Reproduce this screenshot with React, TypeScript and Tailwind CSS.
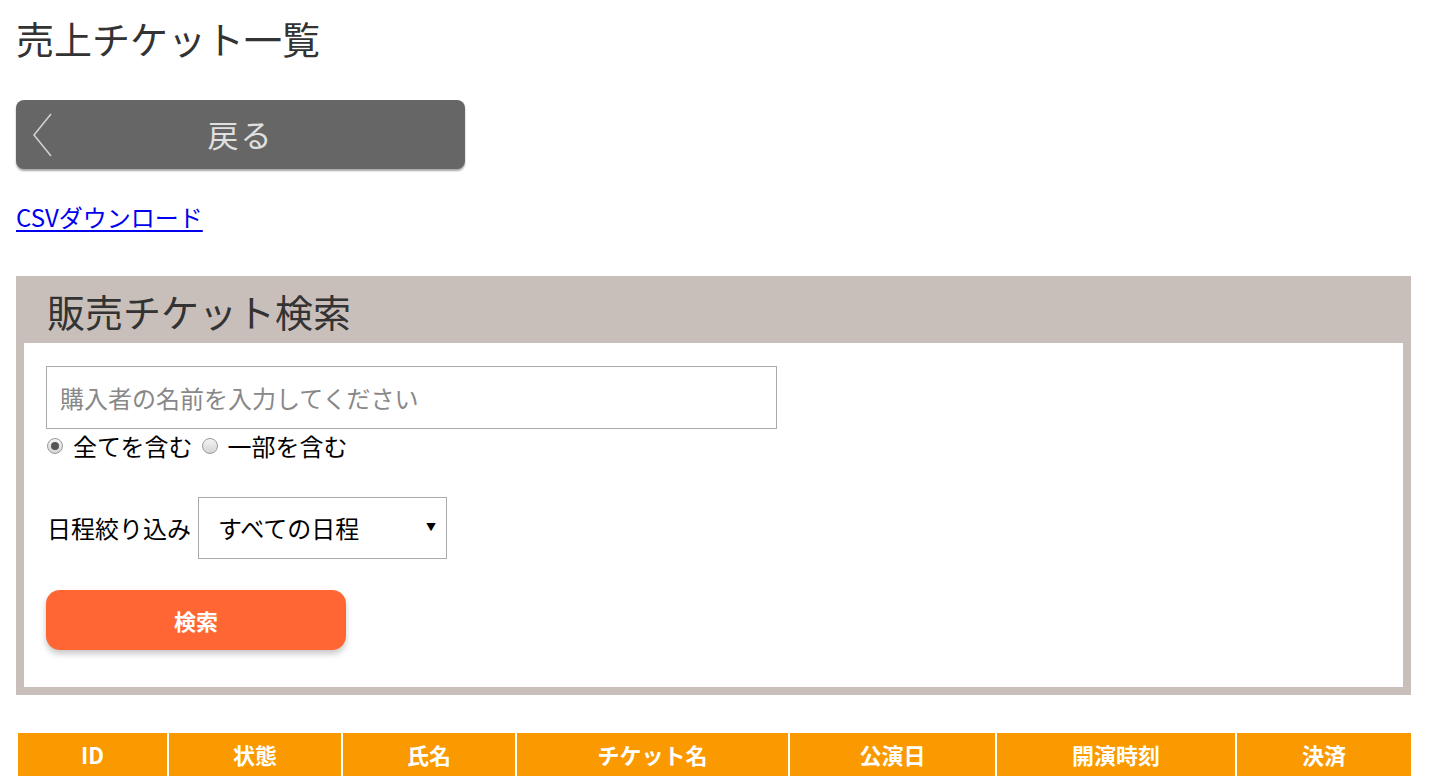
import { useState } from 'react'

const font = { fontFamily: '"Noto Sans CJK JP", "Noto Sans", sans-serif' }

const columns = [
  { label: 'ID', w: 'w-[149px]' },
  { label: '状態', w: 'w-[172px]' },
  { label: '氏名', w: 'w-[172px]' },
  { label: 'チケット名', w: 'w-[271px]' },
  { label: '公演日', w: 'w-[205px]' },
  { label: '開演時刻', w: 'w-[238px]' },
  { label: '決済', w: 'w-[174px]' },
]

function Radio({ checked, label, onClick }: { checked: boolean; label: string; onClick: () => void }) {
  return (
    <label className="flex cursor-pointer items-center" onClick={onClick}>
      <span className="ml-[1px] grid h-[16px] w-[16px] place-items-center rounded-full border border-[#9a9a9a] bg-gradient-to-b from-[#f4f4f4] to-[#d4d4d4]">
        {checked && <span className="h-[8px] w-[8px] rounded-full bg-[#555]" />}
      </span>
      <span className="ml-[10px] text-[24px] text-black">{label}</span>
    </label>
  )
}

export default function App() {
  const [mode, setMode] = useState<'all' | 'part'>('all')

  return (
    <div className="min-h-screen bg-white px-[16px]" style={font}>
      <h1 className="pt-[12px] text-[38px] font-normal leading-[52px] text-[#333]">売上チケット一覧</h1>

      <button className="relative mt-[36px] flex h-[69px] w-[449px] items-center justify-center rounded-[8px] bg-[#666] shadow-[0_2px_2px_rgba(0,0,0,0.35)]">
        <svg className="absolute left-[14px] top-[12px]" width="24" height="46" viewBox="0 0 24 46" fill="none">
          <path d="M21 2 L4 23 L21 44" stroke="#d0d0d0" strokeWidth="1.6" />
        </svg>
        <span className="text-[31px] tracking-[2px] text-[#e0e0e0]">戻る</span>
      </button>

      <div className="mt-[33px] leading-[30px]">
        <a href="#" className="text-[24px] text-[#0000ee] underline underline-offset-[3px]">
          CSVダウンロード
        </a>
      </div>

      <section className="mt-[41px] w-[1395px] bg-[#c9bfba] px-[8px] pb-[8px]">
        <div className="flex h-[67px] items-center pl-[23px] pt-[2px]">
          <h2 className="text-[38px] font-normal text-[#333]">販売チケット検索</h2>
        </div>
        <div className="bg-white px-[22px] pb-[37px] pt-[23px]">
          <input
            className="h-[63px] w-[731px] border border-[#aaa] px-[13px] text-[24px] text-[#333] placeholder:text-[#888] focus:outline-none"
            placeholder="購入者の名前を入力してください"
          />
          <div className="flex h-[34px] items-center gap-[8px]">
            <Radio checked={mode === 'all'} label="全てを含む" onClick={() => setMode('all')} />
            <Radio checked={mode === 'part'} label="一部を含む" onClick={() => setMode('part')} />
          </div>

          <div className="mt-[34px] flex items-center">
            <span className="ml-[1px] text-[24px] text-black">日程絞り込み</span>
            <div className="relative ml-[7px] flex h-[62px] w-[249px] items-center border border-[#aaa] pl-[19px]">
              <span className="text-[24px] text-black">すべての日程</span>
              <span className="absolute right-[10px] top-[21px] text-[10px] text-black">▼</span>
            </div>
          </div>

          <button className="mt-[31px] h-[60px] w-[300px] rounded-[14px] bg-[#ff6633] text-[22px] font-bold text-white shadow-[0_4px_6px_rgba(0,0,0,0.22)]">
            検索
          </button>
        </div>
      </section>

      <div className="mt-[38px] flex gap-[2px] pl-[2px]">
        {columns.map((c) => (
          <div
            key={c.label}
            className={`${c.w} flex h-[43px] items-center justify-center bg-[#fa9900] text-[22px] font-bold text-white`}
          >
            {c.label}
          </div>
        ))}
      </div>
    </div>
  )
}
